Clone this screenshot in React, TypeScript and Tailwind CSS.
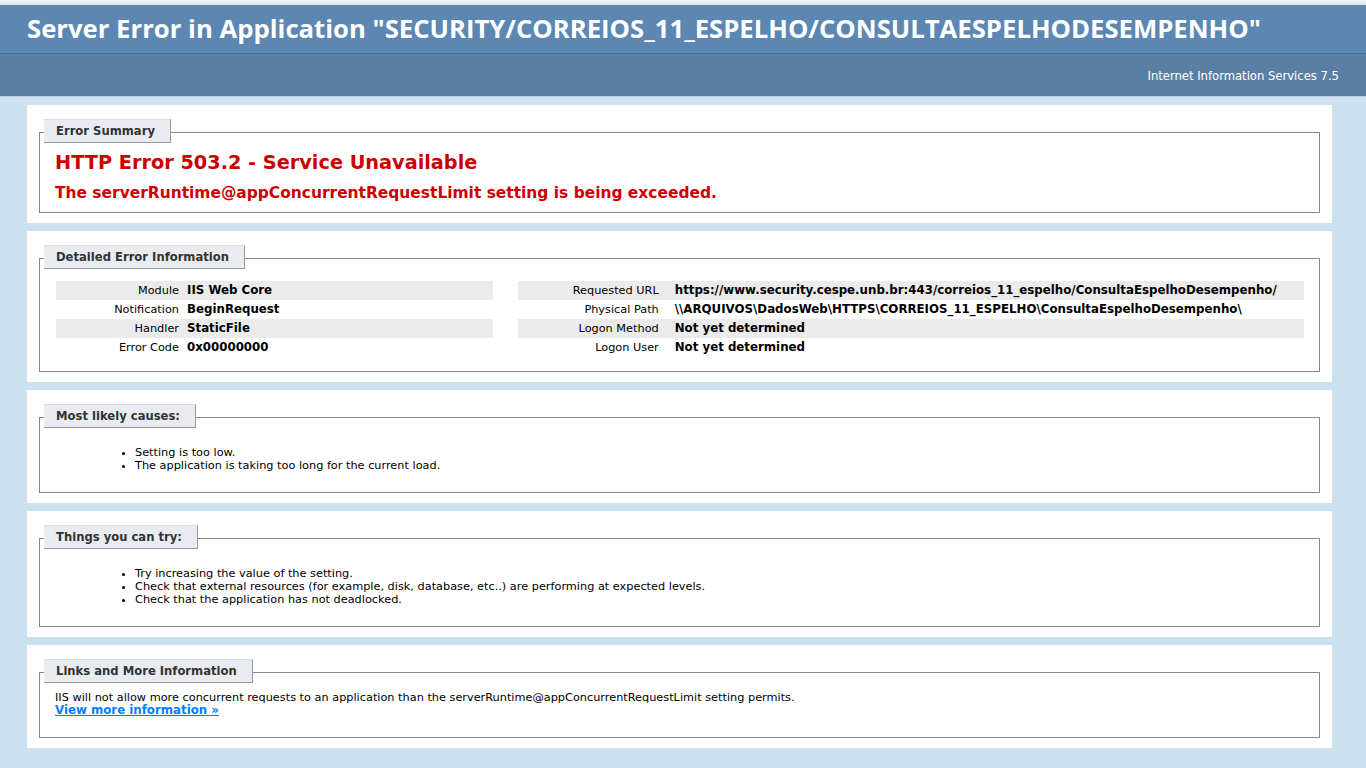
import type { ReactNode } from "react";

const font = "font-['DejaVu_Sans',Verdana,sans-serif]";

function Box({ title, children }: { title: string; children: ReactNode }) {
  return (
    <div className="mt-[8px] bg-white p-[10px]">
      <div className="mx-[2px] mt-[17px] border border-[#888] px-[15px] pb-[10px]">
        <div className="-ml-[11px] -mt-[14px] mb-[8px] w-fit border-t border-r border-b border-t-[#dcdcdc] border-r-[#999] border-b-[#999] bg-[#e8ecf0] pl-[12px] pr-[15px] text-[11.6px] leading-[22px] font-bold text-[#333]">
          {title}
        </div>
        {children}
      </div>
    </div>
  );
}

function Rows({ rows, labelW, gap }: { rows: [string, string][]; labelW: string; gap: string }) {
  return (
    <div className="my-[4px]">
      {rows.map(([k, v], i) => (
        <div key={k} className={`flex py-[3px] leading-[13px] ${i % 2 === 0 ? "bg-[#ebebeb]" : ""}`}>
          <div className={`${labelW} ${gap} shrink-0 text-right`}>{k}</div>
          <div className="whitespace-nowrap text-[11.8px] font-bold">{v}</div>
        </div>
      ))}
    </div>
  );
}

export default function App() {
  return (
    <div className={`min-h-screen bg-[#CBE1EF] text-[11.3px] text-black ${font}`}>
      <div className="h-[5px] bg-gradient-to-b from-[#f2f3f9] to-[#dfe4f0]" />
      <div className="bg-[#5C87B2] px-[27px] py-[6px]">
        <h1 className="font-['Open_Sans',sans-serif] text-[25.7px] leading-[36px] font-bold text-white">
          Server Error in Application "SECURITY/CORREIOS_11_ESPELHO/CONSULTAESPELHODESEMPENHO"
        </h1>
      </div>
      <div className="border-t border-b border-t-[#4A6C8E] border-b-[#C1CFDD] bg-[#5A7FA5] px-[27px] pt-[11px] pb-[8px] text-right text-white">
        <p className="my-[5px] text-[11.6px] leading-[13px]">Internet Information Services 7.5</p>
      </div>

      <div className="ml-[27px] mr-[34px] pb-[20px]">
        <Box title="Error Summary">
          <h2 className="text-[19.3px] leading-[23px] font-bold text-[#CC0000]">HTTP Error 503.2 - Service Unavailable</h2>
          <h3 className="mt-[10px] text-[15.45px] leading-[18px] font-bold text-[#CC0000]">
            The serverRuntime@appConcurrentRequestLimit setting is being exceeded.
          </h3>
        </Box>

        <Box title="Detailed Error Information">
          <div className="flex pl-[1px]">
            <div className="mr-[2%] w-[35%]">
              <Rows
                labelW="w-[131px]"
                gap="pr-[8px]"
                rows={[
                  ["Module", "IIS Web Core"],
                  ["Notification", "BeginRequest"],
                  ["Handler", "StaticFile"],
                  ["Error Code", "0x00000000"],
                ]}
              />
            </div>
            <div className="w-[63%] overflow-hidden">
              <Rows
                labelW="w-[157px]"
                gap="pr-[16px]"
                rows={[
                  ["Requested URL", "https://www.security.cespe.unb.br:443/correios_11_espelho/ConsultaEspelhoDesempenho/"],
                  ["Physical Path", "\\\\ARQUIVOS\\DadosWeb\\HTTPS\\CORREIOS_11_ESPELHO\\ConsultaEspelhoDesempenho\\"],
                  ["Logon Method", "Not yet determined"],
                  ["Logon User", "Not yet determined"],
                ]}
              />
            </div>
          </div>
        </Box>

        <Box title="Most likely causes:">
          <ul className="mt-[18px] mb-[10px] ml-[40px] list-disc pl-[40px] leading-[13px]">
            <li>Setting is too low.</li>
            <li>The application is taking too long for the current load.</li>
          </ul>
        </Box>

        <Box title="Things you can try:">
          <ul className="mt-[18px] mb-[10px] ml-[40px] list-disc pl-[40px] leading-[13px]">
            <li>Try increasing the value of the setting.</li>
            <li>Check that external resources (for example, disk, database, etc..) are performing at expected levels.</li>
            <li>Check that the application has not deadlocked.</li>
          </ul>
        </Box>

        <Box title="Links and More Information">
          <p className="mb-[10px] leading-[13px]">
            IIS will not allow more concurrent requests to an application than the serverRuntime@appConcurrentRequestLimit setting permits.
            <br />
            <a href="#" className="text-[11.8px] font-bold text-[#007EFF] underline">
              View more information »
            </a>
          </p>
        </Box>
      </div>
    </div>
  );
}
